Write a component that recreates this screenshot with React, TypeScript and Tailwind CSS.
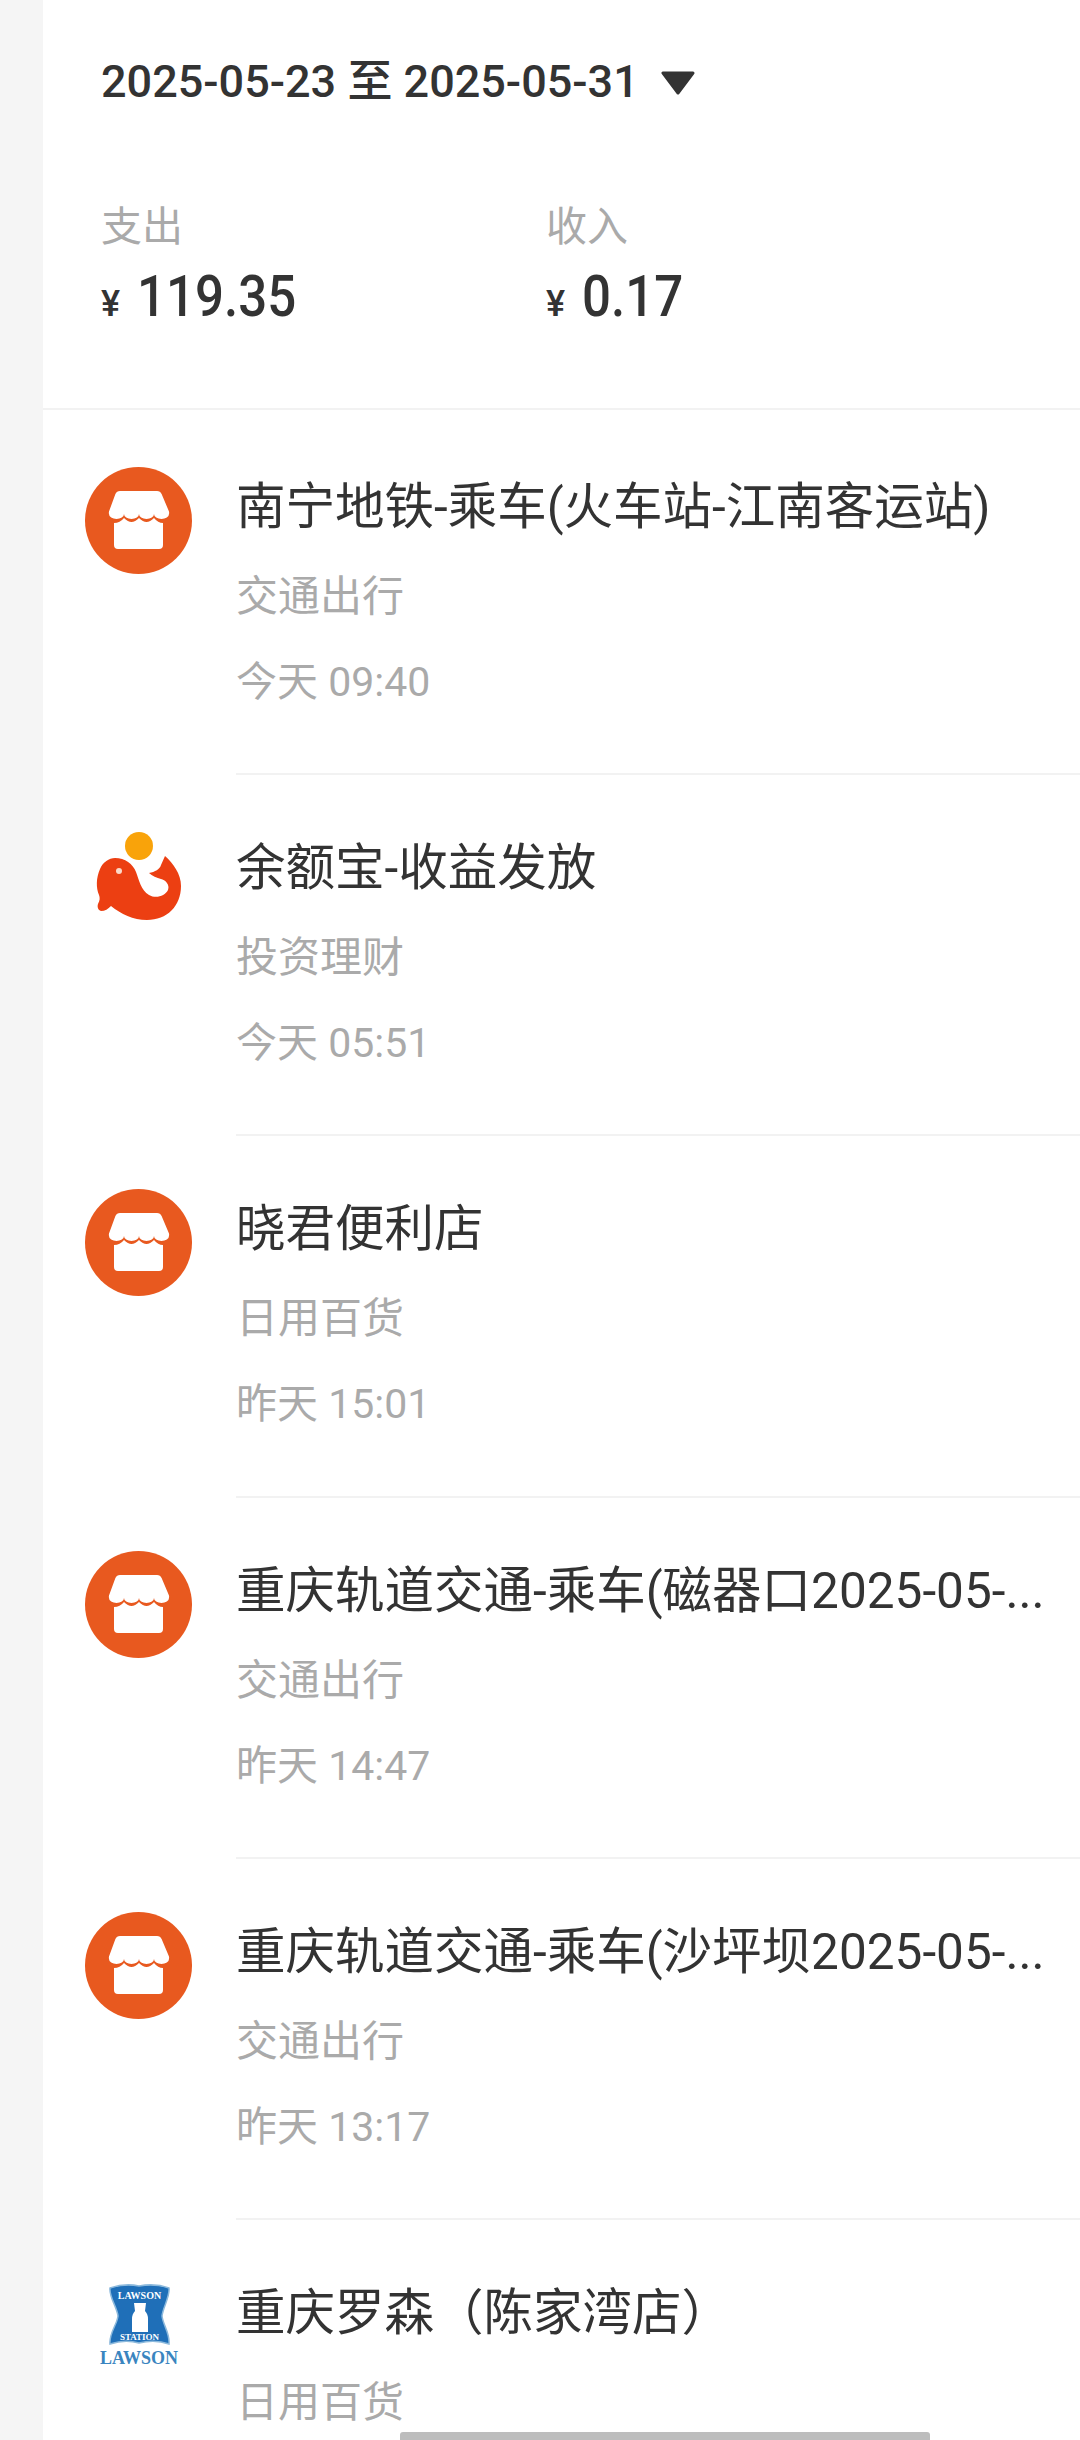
const bills = [
  { name: "南宁地铁-乘车(火车站-江南客运站)", kind: "交通出行", time: "今天 09:40", icon: "store" },
  { name: "余额宝-收益发放", kind: "投资理财", time: "今天 05:51", icon: "fish" },
  { name: "晓君便利店", kind: "日用百货", time: "昨天 15:01", icon: "store" },
  { name: "重庆轨道交通-乘车(磁器口2025-05-...", kind: "交通出行", time: "昨天 14:47", icon: "store" },
  { name: "重庆轨道交通-乘车(沙坪坝2025-05-...", kind: "交通出行", time: "昨天 13:17", icon: "store" },
  { name: "重庆罗森（陈家湾店）", kind: "日用百货", icon: "lawson" },
];

function StoreIcon() {
  return (
    <svg viewBox="0 0 107 107" className="w-[107px] h-[107px]">
      <circle cx="53.5" cy="53.5" r="53.5" fill="#e8591f" />
      <path
        d="M35 24h37a5 5 0 0 1 4.6 3L84 44.5a5 5 0 0 1 0 2.5a7.5 5 0 0 1-15 0a7.5 5 0 0 1-15 0a7.5 5 0 0 1-15 0a7.5 5 0 0 1-15 0a5 5 0 0 1 0-2.5L30.4 27a5 5 0 0 1 4.6-3z"
        fill="#fff"
      />
      <path
        d="M78 56Q73 56 69 51Q65 55 61.5 55Q58 55 54 51Q50 55 46.5 55Q43 55 39 51Q35 56 29 56V78a4 4 0 0 0 4 4H74a4 4 0 0 0 4-4z"
        fill="#fff"
      />
    </svg>
  );
}

function FishIcon() {
  return (
    <svg viewBox="0 0 107 107" className="w-[107px] h-[107px]">
      <circle cx="54" cy="18" r="14" fill="#f9a30a" />
      <path
        d="M30 30C40 30 48 36 51 44C54 52 56 62 64 67C71 71 80 68 83 62C85 56 80 52 76 51C72 50 67 48 64 45C70 44 75 41 76 37L80 28C88 35 96 46 96 58C96 78 82 92 62 92C48 92 36 86 26 78C23 81 20 83 16 83C13 82 12 79 13 76C15 72 15 70 14 67C11 60 11 50 15 41C18 34 24 30 30 30Z"
        fill="#ec3f12"
      />
      <circle cx="34" cy="43" r="3" fill="#fbd9c9" />
    </svg>
  );
}

const shieldPath =
  "M25 15Q40 10 54 13Q70 10 84 15C85 24 78 34 77 43C78 52 85 60 84 71Q70 66 54 70Q40 66 25 71C24 60 32 52 33 43C32 34 24 24 25 15Z";

function LawsonIcon() {
  return (
    <svg viewBox="0 0 107 107" className="w-[107px] h-[107px]">
      <path d={shieldPath} fill="#1f6fb8" stroke="#8cb9dc" strokeWidth="1.5" />
      <path d="M49 30L61 30L60 38Q63 41 63 46V59H47V46Q47 41 50 38Z" fill="#fff" />
      <text x="54.5" y="26" textAnchor="middle" fontSize="10" fontWeight="700" fill="#fff" fontFamily="Liberation Serif, serif">
        LAWSON
      </text>
      <text x="54.5" y="67" textAnchor="middle" fontSize="9" fontWeight="700" fill="#fff" fontFamily="Liberation Serif, serif">
        STATION
      </text>
      <text x="54" y="91" textAnchor="middle" fontSize="18" fontWeight="700" fill="#3a85bf" fontFamily="Liberation Serif, serif">
        LAWSON
      </text>
    </svg>
  );
}

function BillIcon({ type }: { type: string }) {
  if (type === "fish") return <FishIcon />;
  if (type === "lawson") return <LawsonIcon />;
  return <StoreIcon />;
}

function Amount({ label, value }: { label: string; value: string }) {
  return (
    <div className="w-[445px] flex flex-col">
      <span className="text-[41px] leading-[50px] text-[#aaaaaa]">{label}</span>
      <div className="flex items-baseline mt-[1px] h-[66px] text-[#333333]">
        <span className="text-[36px] font-medium w-[36px]">¥</span>
        <span className="text-[58px] font-medium origin-left scale-x-[0.88]">{value}</span>
      </div>
    </div>
  );
}

export default function App() {
  return (
    <div className="relative w-[1080px] h-[2440px] overflow-hidden bg-[#f5f5f5] pl-[43px] font-['Roboto','Noto_Sans_CJK_SC',sans-serif]">
      <div className="bg-white h-full">
        {/* date range and totals */}
        <div className="pl-[58px] pt-[49px] h-[410px] border-b-2 border-[#f2f2f2]">
          <div className="flex items-center h-[66px] text-[#333333]">
            <span className="text-[45px] font-medium">2025-05-23 至 2025-05-31</span>
            <svg viewBox="0 0 36 24" className="ml-[21px] mt-[2px] w-[36px] h-[24px]">
              <path d="M3 2h30l-15 20z" fill="#333333" stroke="#333333" strokeWidth="3" strokeLinejoin="round" />
            </svg>
          </div>
          <div className="flex mt-[87px]">
            <Amount label="支出" value="119.35" />
            <Amount label="收入" value="0.17" />
          </div>
        </div>

        <div className="pt-[3.5px]">
          {bills.map((bill) => (
            <div key={bill.name} className="flex h-[361.4px]">
              <div className="w-[193px] shrink-0 pl-[42px] pt-[53px]">
                <BillIcon type={bill.icon} />
              </div>
              <div className="flex-1 flex flex-col border-b-2 border-[#f2f2f2] pt-[60px]">
                <div className="text-[49.5px] leading-[66px] text-[#333333] whitespace-nowrap">{bill.name}</div>
                <div className="text-[42px] leading-[56px] text-[#aaaaaa] mt-[29px]">{bill.kind}</div>
                {bill.time && <div className="text-[41px] leading-[56px] text-[#aaaaaa] mt-[29px]">{bill.time}</div>}
              </div>
            </div>
          ))}
        </div>
      </div>

      {/* home indicator */}
      <div className="absolute left-[400px] bottom-0 w-[530px] h-[8px] rounded-t-[3px] bg-[#bdbdbd]" />
    </div>
  );
}
